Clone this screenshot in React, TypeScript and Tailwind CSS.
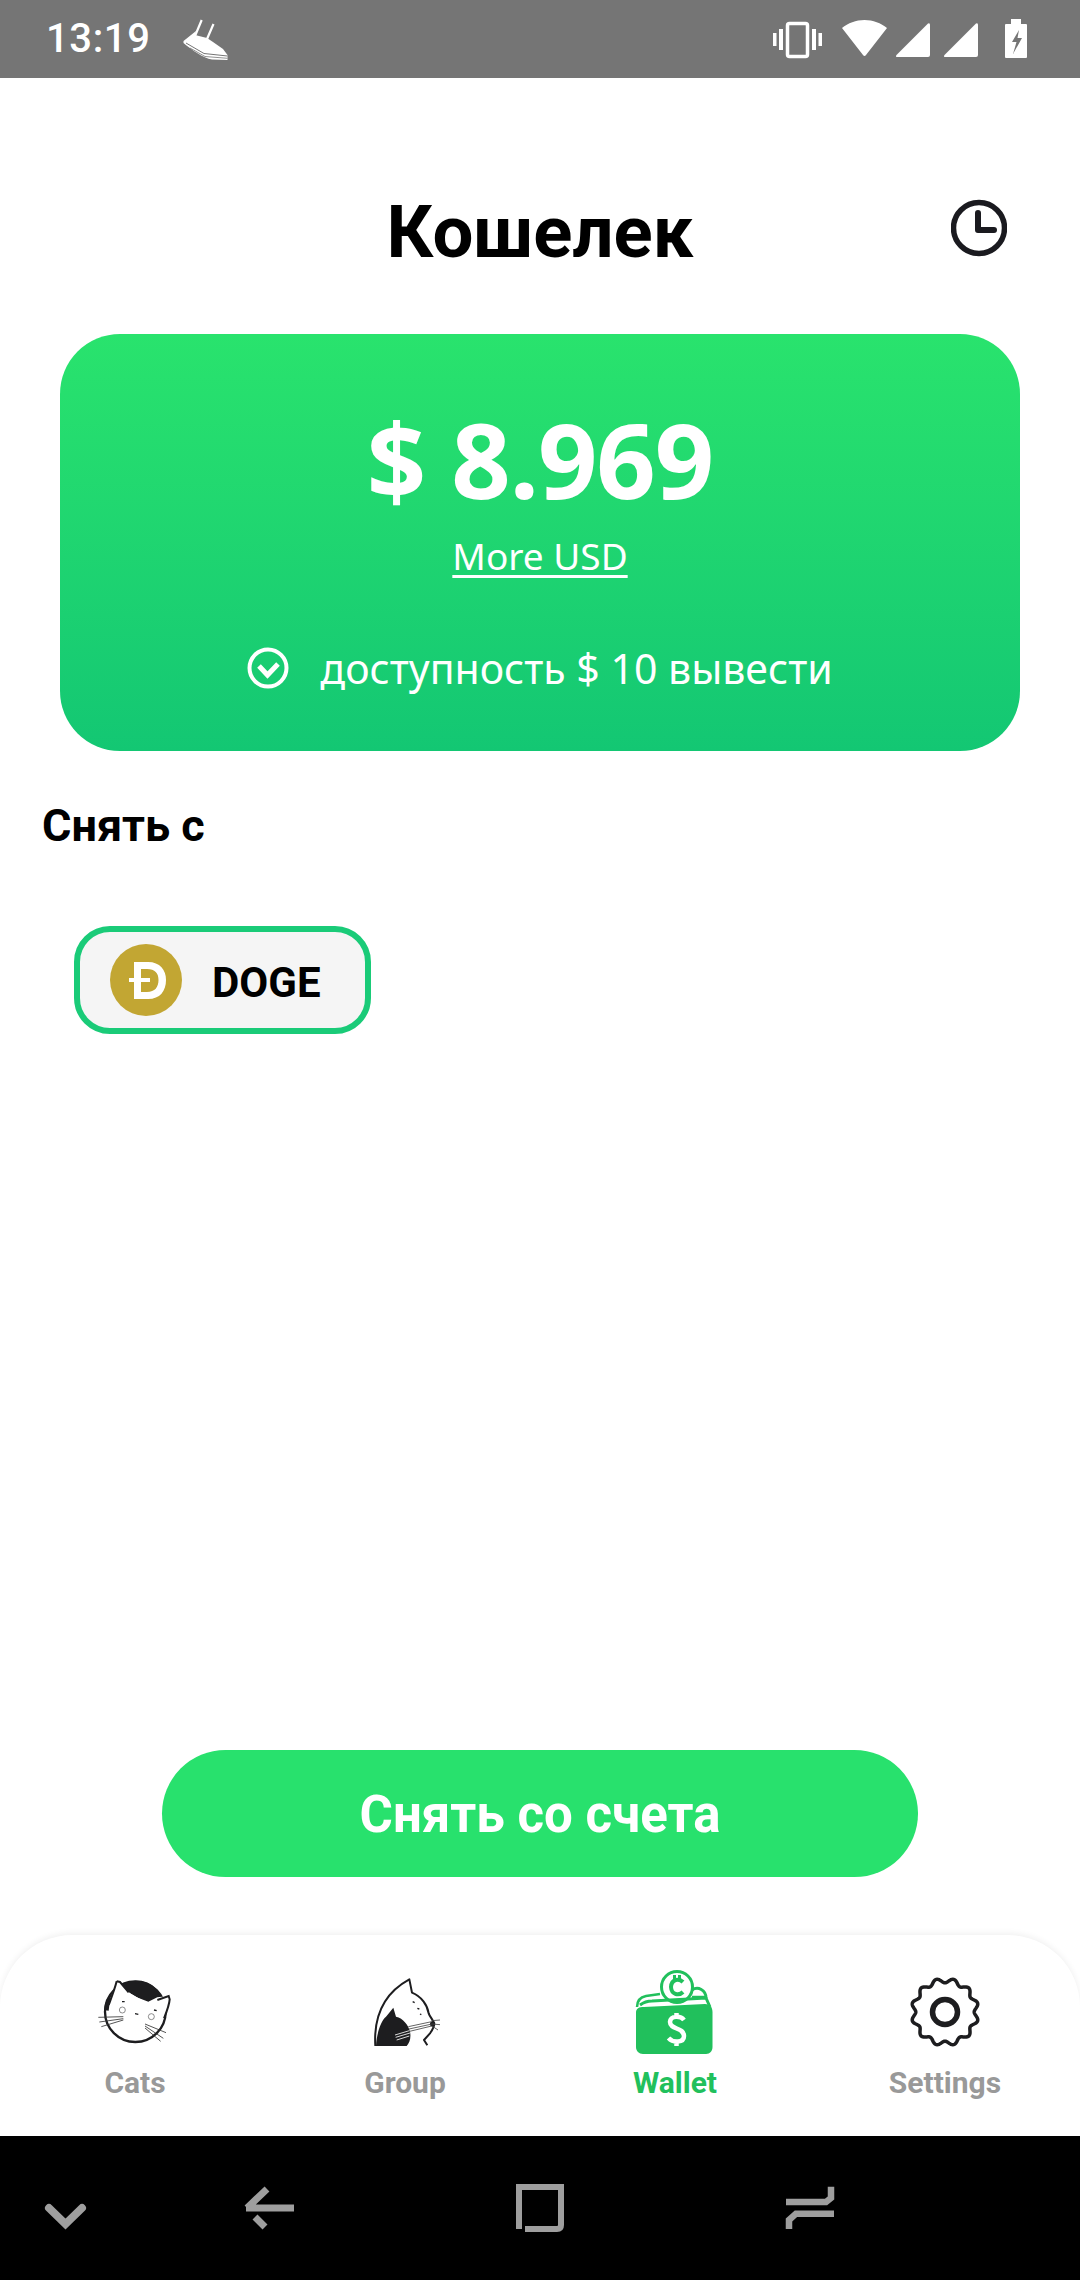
import React from "react";

const gearPath = (() => {
  const pts: string[] = [];
  for (let i = 0; i < 240; i++) {
    const t = (i / 240) * Math.PI * 2;
    const r = 31.5 + 2.3 * Math.cos(12 * (t - Math.PI / 12));
    const x = 65 + r * Math.sin(t);
    const y = 52 - r * Math.cos(t);
    pts.push(`${i === 0 ? "M" : "L"}${x.toFixed(2)} ${y.toFixed(2)}`);
  }
  return pts.join(" ") + " Z";
})();

function StatusLeft() {
  return (
    <div className="flex items-center pl-[46px] gap-[31px]">
      <span className="text-white text-[40px] leading-[78px] tracking-[0.6px] font-medium font-['Roboto',sans-serif]">13:19</span>
      <svg width="48" height="44" viewBox="181 15 48 44" fill="white">
        <path d="M201.700 18 L195 34 M213.500 22 L207 37" stroke="white" strokeWidth="2.200" fill="none" />
        <path d="M183.500 39 L196 29 L195 33 L207 36 L213 40 L223 47 L227.500 53 L227.500 58 L212 57.500 C203 56 192 48 183.500 41 Z" />
        <path d="M186 41 L204 51.500 L227.500 54" stroke="#757575" strokeWidth="1" fill="none" />
        <path d="M190 46 L205 54.500 L227.500 56.300" stroke="#757575" strokeWidth="0.800" fill="none" />
      </svg>
    </div>
  );
}

function StatusRight() {
  return (
    <svg width="262" height="78" viewBox="770 0 262 78" fill="white" className="mr-[48px]">
      <rect x="773" y="33" width="3.500" height="13" />
      <rect x="779" y="29" width="4" height="21" />
      <rect x="787.500" y="23.500" width="20" height="33" rx="2" fill="none" stroke="white" strokeWidth="3.500" />
      <rect x="812" y="29" width="4" height="21" />
      <rect x="818.500" y="33" width="3.500" height="13" />
      <path d="M842 28 C848 23 856 20 864.500 20 C873 20 881 23 887 28 L866 55 Q864.500 57 863 55 Z" />
      <path d="M896.500 55 L928 23.500 Q930 22.500 930 25 L930 55 Q930 57 928 57 L897.500 57 Q895 57 896.500 55 Z" />
      <path d="M944.500 55 L976 23.500 Q978 22.500 978 25 L978 55 Q978 57 976 57 L945.500 57 Q943 57 944.500 55 Z" />
      <path fillRule="evenodd" d="M1011 19 L1021 19 L1021 24 L1026 24 Q1027 24 1027 25 L1027 57 Q1027 58 1026 58 L1006 58 Q1005 58 1005 57 L1005 25 Q1005 24 1006 24 L1011 24 Z M1019 30 L1012 42 L1016.500 42 L1013 54 L1022 38 L1017.500 38 Z" />
    </svg>
  );
}

function CatsIcon() {
  return (
    <svg width="130" height="90" viewBox="-30 0 390 270">
      <circle cx="166" cy="155" r="91" fill="white" stroke="#1d1d1f" strokeWidth="7" />
      <path d="M74 152 C72 105 120 62 168 62 C205 62 232 82 246 112 L200 128 L150 100 L112 66 Z" fill="#1d1d1f" />
      <path d="M110 66 L120 66 L148 98 L170 112 L205 125 L232 112 L268 108 C268 135 258 155 250 178 L80 155 C85 125 100 95 110 66 Z" fill="white" />
      <path d="M110 64 C105 85 96 108 86 135 M110 64 L120 66 L146 97 M232 120 L266 108 L269 118 C268 135 260 155 252 175" fill="none" stroke="#1d1d1f" strokeWidth="6" />
      <path d="M72 150 L86 152 L92 105 C82 115 74 130 72 150 Z" fill="#1d1d1f" />
      <path d="M55 172 L130 170 M58 186 L130 176 M64 200 L130 180 M195 192 L258 218 M195 198 L250 235 M195 204 L242 244" stroke="#333" strokeWidth="2.500" fill="none" />
      <path d="M165 161 L175 163 M126 125 L134 125 M222 150 L230 152" stroke="#1d1d1f" strokeWidth="4" />
      <circle cx="127" cy="150" r="9" fill="none" stroke="#555" strokeWidth="2" />
      <circle cx="214" cy="170" r="9" fill="none" stroke="#555" strokeWidth="2" />
    </svg>
  );
}

function GroupIcon() {
  return (
    <svg width="130" height="90" viewBox="-30 0 390 270">
      <path d="M76 258 C70 160 110 95 178 58 L186 98 C215 110 232 135 236 160 C240 172 250 180 252 190 C254 200 248 208 240 220 L222 240 L232 256" fill="white" stroke="#1d1d1f" strokeWidth="6" strokeLinejoin="round" />
      <path d="M78 258 C80 225 90 185 108 170 L130 143 L138 170 C160 175 175 195 180 215 C184 235 178 250 170 258 Z" fill="#1d1d1f" />
      <circle cx="248" cy="192" r="8" fill="#1d1d1f" />
      <path d="M175 200 L245 185 M177 207 L246 192 M179 214 L245 198 M245 182 L270 180 M246 192 L270 194 M246 198 L264 210" stroke="#444" strokeWidth="2.500" fill="none" />
      <path d="M135 225 L178 212 M137 232 L180 219 M140 240 L178 228" stroke="white" strokeWidth="2.500" />
      <path d="M188 125 L194 128 M202 145 L208 147 M210 162 L214 164" stroke="#1d1d1f" strokeWidth="4" />
    </svg>
  );
}

function WalletIcon() {
  return (
    <svg width="110" height="90" viewBox="0 0 110 90" className="overflow-visible">
      <path d="M17 47 C17 40 21 37 26 36 L40 34" fill="none" stroke="#21c05c" strokeWidth="2.500" />
      <path d="M72 30 C78 26 86 30 86 38" fill="none" stroke="#21c05c" strokeWidth="3" />
      <path d="M72 37 L86 37" stroke="#21c05c" strokeWidth="2.500" />
      <circle cx="57" cy="27" r="15.500" fill="white" stroke="#21c05c" strokeWidth="3" />
      <path d="M63 22 C59 18 51.500 19 51 27 C51.500 35 59 36 63 32" fill="none" stroke="#21c05c" strokeWidth="4" />
      <path d="M54.500 15 L54.500 20 M59.500 15 L59.500 20" stroke="#21c05c" strokeWidth="3" />
      <path d="M20 45 C24 42 28 41 32 41 L86 38 L90 47" fill="none" stroke="#21c05c" strokeWidth="3" />
      <path d="M16 53 C16 48 19 47 24 47 L85 44 C90 44 92.500 47 92.500 52 L92.500 87 C92.500 91 90 94 86 94 L23 94 C19 94 16 91 16 87 Z" fill="#21c05c" />
      <path d="M64 60 C61 56 50.500 55 50 62 C50 70 64 67 64 76 C64 83 53 83 48.500 78 M56.500 53 L56.500 58 M56.500 81 L56.500 86" fill="none" stroke="white" strokeWidth="4.500" />
    </svg>
  );
}

function SettingsIcon() {
  return (
    <svg width="130" height="90" viewBox="0 0 130 90" className="overflow-visible">
      <path d={gearPath} fill="none" stroke="#1d1d1f" strokeWidth="3.500" />
      <circle cx="65" cy="52" r="12.500" fill="none" stroke="#1d1d1f" strokeWidth="5.500" />
    </svg>
  );
}

const tabs = [
  { label: "Cats", icon: <CatsIcon />, cls: "text-[#999999]" },
  { label: "Group", icon: <GroupIcon />, cls: "text-[#999999]" },
  { label: "Wallet", icon: <WalletIcon />, cls: "text-[#21c05c]" },
  { label: "Settings", icon: <SettingsIcon />, cls: "text-[#999999]" },
];

export default function App() {
  return (
    <div className="w-[1080px] h-[2280px] flex flex-col bg-white font-['Roboto',sans-serif] overflow-hidden">
      <div className="h-[78px] shrink-0 bg-[#757575] flex items-center justify-between">
        <StatusLeft />
        <StatusRight />
      </div>

      <div className="flex-1 flex flex-col">
        <div className="mt-[105px] h-[100px] grid grid-cols-[1fr_auto_1fr] items-center">
          <div />
          <h1 className="text-[72.5px] leading-[100px] font-bold text-black">Кошелек</h1>
          <div className="flex justify-end pr-[73px]">
            <svg width="56" height="58" viewBox="0 0 56 58" fill="none" stroke="#1a1a1f" className="mb-[10px]">
              <circle cx="28" cy="29" r="25.500" strokeWidth="5.500" />
              <path d="M27 14 L27 31 L43 31" strokeWidth="6" strokeLinejoin="round" strokeLinecap="round" />
            </svg>
          </div>
        </div>

        <div className="mt-[51px] mx-[60px] h-[417px] rounded-[60px] bg-gradient-to-b from-[#29e36d] to-[#13c773] flex flex-col items-center text-white font-['Noto_Sans',sans-serif]">
          <div className="mt-[55px] text-[104px] leading-[140px] font-bold tracking-[-1px]">$ 8.969</div>
          <a className="mt-[2px] text-[37px] leading-[50px] underline underline-offset-[5px] decoration-[3px]">More USD</a>
          <div className="mt-[62px] flex items-center gap-[31px]">
            <svg width="42" height="42" viewBox="0 0 42 42" fill="none" stroke="white">
              <circle cx="21" cy="21" r="18.500" strokeWidth="4" />
              <path d="M12 19 L20.500 28 L31 17" strokeWidth="5" />
            </svg>
            <span className="text-[41px] leading-[50px]">доступность $ 10 вывести</span>
          </div>
        </div>

        <div className="mt-[45px] ml-[42px] text-[45px] leading-[60px] font-bold text-black">Снять с</div>

        <div className="mt-[70px] ml-[74px] w-[297px] h-[108px] rounded-[36px] border-[6px] border-[#1acb78] bg-[#f5f5f5] flex items-center pl-[30px]">
          <svg width="72" height="72" viewBox="0 0 72 72">
            <circle cx="36" cy="36" r="36" fill="#c2a633" />
            <path fillRule="evenodd" d="M24 18 L38 18 C50 18 56 26 56 36 C56 47 50 55 38 55 L24 55 L24 38 L19 38 L19 34 L24 34 Z M31 25 L31 34 L40 34 L40 38 L31 38 L31 48 L37 48 C45 48 48.500 43 48.500 36 C48.500 29 45 25 37 25 Z" fill="white" />
          </svg>
          <span className="ml-[30px] mt-[5px] text-[42px] leading-[50px] font-bold text-black">DOGE</span>
        </div>

        <div className="flex-1" />

        <button className="mb-[58px] mx-[162px] h-[127px] pt-[4px] rounded-full bg-[#28e16d] text-white text-[51px] font-bold">Снять со счета</button>

        <div className="h-[201px] rounded-t-[72px] bg-white shadow-[0_-2px_6px_rgba(0,0,0,0.06)] grid grid-cols-4 pt-[25px]">
          {tabs.map((t) => (
            <div key={t.label} className="flex flex-col items-center">
              {t.icon}
              <span className={`mt-[15px] text-[30px] leading-[36px] font-bold ${t.cls}`}>{t.label}</span>
            </div>
          ))}
        </div>
      </div>

      <div className="h-[144px] shrink-0 bg-black grid grid-cols-[126px_288px_252px_288px_126px] items-center">
        <svg width="126" height="144" viewBox="0 0 126 144" fill="none" stroke="#9e9e9e" strokeWidth="8" strokeLinecap="round">
          <path d="M49 72 L65.500 88 L82 72" />
        </svg>
        <svg width="288" height="144" viewBox="0 0 288 144" fill="none" stroke="#9e9e9e" strokeWidth="7">
          <path d="M141 53 L121 72 M120 72 L168 72 M139 91 L129 81" />
        </svg>
        <svg width="252" height="144" viewBox="0 0 252 144" fill="none" stroke="#9e9e9e" strokeWidth="6">
          <path d="M105 93 L105 51 L147 51 L147 89 Q147 93 143 93 L111 93" />
        </svg>
        <svg width="288" height="144" viewBox="0 0 288 144" fill="none" stroke="#9e9e9e" strokeWidth="6.500">
          <path d="M120 66 L160 66 L165 62 L165 50.700 M168 77.700 L130 77.700 L123 84 L123 93" />
        </svg>
        <div />
      </div>
    </div>
  );
}
